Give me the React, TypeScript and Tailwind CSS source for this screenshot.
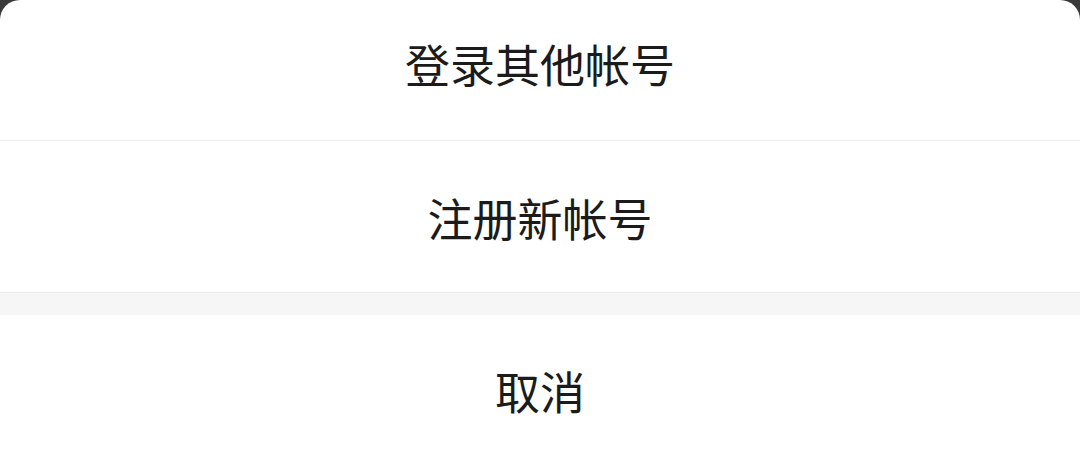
export default function App() {
  const font = { fontFamily: '"Noto Sans CJK SC", "Noto Sans", sans-serif' };
  return (
    <div className="w-[1080px] h-[463px] bg-[#3a3a3a] overflow-hidden" style={font}>
      <div className="h-full bg-white rounded-t-[20px] flex flex-col text-[#1b1b1b]">
        <div className="h-[140px] flex items-center justify-center text-[45px] leading-none pb-[14px]">登录其他帐号</div>
        <div className="h-px bg-[#ececec]" />
        <div className="h-[151px] flex items-center justify-center text-[45px] leading-none pt-[2px]">注册新帐号</div>
        <div className="h-[23px] bg-[#f6f6f6] border-t border-[#e9e9e9]" />
        <div className="flex-1 flex items-center justify-center text-[45px] leading-none pt-[2px]">取消</div>
      </div>
    </div>
  );
}
